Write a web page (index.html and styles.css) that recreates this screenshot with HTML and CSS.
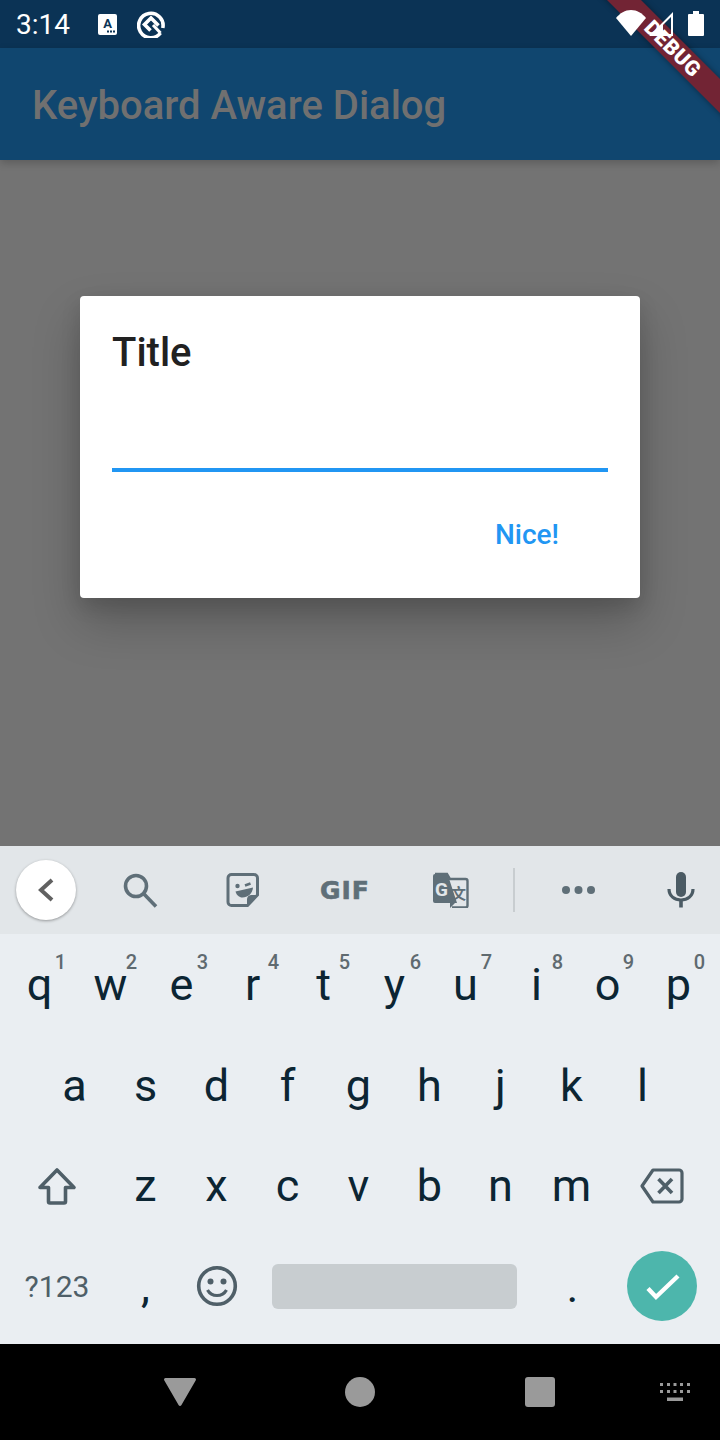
FILE: index.html
```html
<!DOCTYPE html>
<html lang="en">
<head>
  <meta charset="UTF-8">
  <meta name="viewport" content="width=device-width, initial-scale=1.0">
  <title>Keyboard Aware Dialog</title>
  <link rel="stylesheet" href="styles.css">
</head>
<body>
  <div class="status">
    <div class="status-left">
      <span class="time">3:14</span>
      <svg class="icon-a" viewBox="0 0 19 21">
        <rect width="19" height="21" rx="2" fill="#fff"/>
        <text x="9.5" y="13.5" text-anchor="middle" class="icon-a-letter">A</text>
        <path d="M9 16.500h2v2H9zM12 16.500h2v2h-2zM15 16.500h2v2h-2z" fill="#0b3355"/>
      </svg>
      <svg class="icon-q" viewBox="0 0 28 28">
        <path d="M23.500 23A12.200 12.200 0 1 1 25.800 18" fill="none" stroke="#fff" stroke-width="3.600"/>
        <path d="M21.500 15.500 14 8 7.500 14.500 13.500 20.500" fill="none" stroke="#fff" stroke-width="3.600"/>
        <path d="M16 15 23.500 23" fill="none" stroke="#fff" stroke-width="3"/>
      </svg>
    </div>
    <div class="status-right">
      <svg class="icon-wifi" viewBox="0 0 30 26">
        <path d="M0 8C4 3 9 0 15 0s11 3 15 8L15 26Z" fill="#fff"/>
      </svg>
      <svg class="icon-signal" viewBox="0 0 24 24">
        <path d="M23 2.500V23H2.500Z" fill="none" stroke="#fff" stroke-width="2"/>
        <path d="M1 24 14 11V24Z" fill="#fff"/>
      </svg>
      <svg class="icon-battery" viewBox="0 0 16 25">
        <path d="M5 0h6v3h4a1 1 0 0 1 1 1v20a1 1 0 0 1-1 1H1a1 1 0 0 1-1-1V4a1 1 0 0 1 1-1h4Z" fill="#fff"/>
      </svg>
    </div>
  </div>

  <header class="appbar">
    <h1>Keyboard Aware Dialog</h1>
  </header>

  <main class="content">
    <div class="dialog">
      <h2>Title</h2>
      <div class="field"></div>
      <div class="actions">
        <span class="action-btn">Nice!</span>
      </div>
    </div>
  </main>

  <div class="corner">
    <div class="ribbon">DEBUG</div>
  </div>

  <section class="keyboard">
    <div class="toolbar">
      <div class="tool">
        <div class="back">
          <svg width="24" height="30" viewBox="0 0 24 30"><path d="M18 5 7 15 18 25" fill="none" stroke="#616161" stroke-width="4"/></svg>
        </div>
      </div>
      <div class="tool">
        <svg width="36" height="36" viewBox="0 0 36 36">
          <circle cx="13" cy="14" r="10.500" fill="none" stroke="#5f6f78" stroke-width="3.600"/>
          <path d="M20.500 21.500 33 34.500" fill="none" stroke="#5f6f78" stroke-width="3.600"/>
        </svg>
      </div>
      <div class="tool">
        <svg width="36" height="36" viewBox="0 0 36 36">
          <path d="M6.500 2.500H29A3.500 3.500 0 0 1 32.500 6V23L22.500 33.500H6.500A3.500 3.500 0 0 1 3 30V6A3.500 3.500 0 0 1 6.500 2.500Z" fill="none" stroke="#5f6f78" stroke-width="3"/>
          <path d="M32 23h-6a4.500 4.500 0 0 0-4 4v6Z" fill="#5f6f78"/>
          <circle cx="12.500" cy="14" r="2.200" fill="#5f6f78"/>
          <path d="M20 13.500 25.500 11.500" stroke="#5f6f78" stroke-width="2.600" fill="none"/>
          <path d="M10.500 19.500 28 15.500C27.500 22 22.500 25.500 17.500 25.500 14 25.500 11.500 23 10.500 19.500Z" fill="#5f6f78"/>
        </svg>
      </div>
      <div class="tool gif">GIF</div>
      <div class="tool">
        <svg width="36" height="36" viewBox="0 0 36 36">
          <path d="M2 2H14L17 7H32.500A2 2 0 0 1 34.500 9V33.500A2 2 0 0 1 32.500 35.500H19" fill="none" stroke="#5f6f78" stroke-width="2.400"/>
          <path d="M2 2H14.500L24 31H22L17 36V31H2A2 2 0 0 1 0 29V4A2 2 0 0 1 2 2Z" fill="#5f6f78"/>
          <text x="8.500" y="23.500" text-anchor="middle" class="translate-g">G</text>
          <text x="25.500" y="27" text-anchor="middle" class="translate-x">文</text>
        </svg>
      </div>
      <div class="tool"><div class="tool-sep"></div></div>
      <div class="tool">
        <svg width="34" height="10" viewBox="0 0 34 10">
          <circle cx="5" cy="5" r="4" fill="#5f6f78"/>
          <circle cx="17.500" cy="5" r="4" fill="#5f6f78"/>
          <circle cx="30" cy="5" r="4" fill="#5f6f78"/>
        </svg>
      </div>
      <div class="tool tool-mic">
        <svg width="28" height="36" viewBox="0 0 28 36">
          <rect x="9" y="0" width="10" height="25" rx="5" fill="#4b5b64"/>
          <path d="M2 17C2 24 7.500 28 14 28S26 24 26 17" fill="none" stroke="#4b5b64" stroke-width="3.200"/>
          <path d="M14 27V35.500" stroke="#4b5b64" stroke-width="3.600"/>
        </svg>
      </div>
    </div>

    <div class="keys">
      <div class="row">
        <div class="key">q<sup>1</sup></div>
        <div class="key">w<sup>2</sup></div>
        <div class="key">e<sup>3</sup></div>
        <div class="key">r<sup>4</sup></div>
        <div class="key">t<sup>5</sup></div>
        <div class="key">y<sup>6</sup></div>
        <div class="key">u<sup>7</sup></div>
        <div class="key">i<sup>8</sup></div>
        <div class="key">o<sup>9</sup></div>
        <div class="key">p<sup>0</sup></div>
      </div>
      <div class="row row-home">
        <div class="key">a</div>
        <div class="key">s</div>
        <div class="key">d</div>
        <div class="key">f</div>
        <div class="key">g</div>
        <div class="key">h</div>
        <div class="key">j</div>
        <div class="key">k</div>
        <div class="key">l</div>
      </div>
      <div class="row">
        <div class="key key-wide">
          <svg width="40" height="38" viewBox="0 0 40 38"><path d="M20 3 37 20.500H28.500V34.500A1.500 1.500 0 0 1 27 36H13A1.500 1.500 0 0 1 11.500 34.500V20.500H3Z" fill="none" stroke="#4f5f68" stroke-width="3.600" stroke-linejoin="round"/></svg>
        </div>
        <div class="key">z</div>
        <div class="key">x</div>
        <div class="key">c</div>
        <div class="key">v</div>
        <div class="key">b</div>
        <div class="key">n</div>
        <div class="key">m</div>
        <div class="key key-wide key-del">
          <svg width="44" height="36" viewBox="0 0 44 36">
            <path d="M13 2H39A3 3 0 0 1 42 5V31A3 3 0 0 1 39 34H13L2 18Z" fill="none" stroke="#4f5f68" stroke-width="3.200" stroke-linejoin="round"/>
            <path d="M18.500 11 32 25M32 11 18.500 25" stroke="#4f5f68" stroke-width="3.600"/>
          </svg>
        </div>
      </div>
      <div class="row">
        <div class="key key-wide key-sym">?123</div>
        <div class="key">,</div>
        <div class="key">
          <svg width="42" height="42" viewBox="0 0 42 42">
            <circle cx="21" cy="21" r="18.300" fill="none" stroke="#4f5f68" stroke-width="3.600"/>
            <circle cx="14.500" cy="16.500" r="3" fill="#4f5f68"/>
            <circle cx="27.500" cy="16.500" r="3" fill="#4f5f68"/>
            <path d="M11.500 25C13.500 28.500 17 30.500 21 30.500S28.500 28.500 30.500 25" fill="none" stroke="#4f5f68" stroke-width="3.200"/>
          </svg>
        </div>
        <div class="key key-space"><div class="space-bar"></div></div>
        <div class="key">.</div>
        <div class="key key-wide">
          <div class="enter">
            <svg width="36" height="30" viewBox="0 0 36 30"><path d="M4 17.500 12 26 34 5" fill="none" stroke="#fff" stroke-width="4.400"/></svg>
          </div>
        </div>
      </div>
    </div>
  </section>

  <nav class="navbar">
    <div class="nav-item">
      <svg width="32" height="28" viewBox="0 0 32 28"><path d="M1.500 0H30.500A1.500 1.500 0 0 1 31.800 2.200L17.300 27.200A1.500 1.500 0 0 1 14.700 27.200L.2 2.200A1.500 1.500 0 0 1 1.500 0Z" fill="#9a9a9a"/></svg>
    </div>
    <div class="nav-item"><div class="nav-circle"></div></div>
    <div class="nav-item"><div class="nav-square"></div></div>
    <div class="nav-item">
      <svg width="30" height="18" viewBox="0 0 30 18">
        <path d="M0 0h3v3H0zM7 0h3v3H7zM13.500 0h3v3h-3zM20 0h3v3h-3zM27 0h3v3h-3zM0 7h3v3H0zM7 7h3v3H7zM13.500 7h3v3h-3zM20 7h3v3h-3zM27 7h3v3h-3zM7 14.500h16V18H7z" fill="#9a9a9a"/>
      </svg>
    </div>
  </nav>
</body>
</html>
```

FILE: styles.css
```css
* {
  box-sizing: border-box;
}

html, body {
  margin: 0;
  height: 1440px;
}

body {
  width: 720px;
  display: flex;
  flex-direction: column;
  overflow: hidden;
  position: relative;
  font-family: Roboto, 'Noto Sans', sans-serif;
  background-color: #737373;
}

/* status bar */
.status {
  height: 48px;
  flex: none;
  display: flex;
  justify-content: space-between;
  background-color: #0b3355;
  color: #fff;
}

.status-left {
  display: flex;
  align-items: center;
  padding-left: 16px;
}

.time {
  font-size: 28px;
  width: 82px;
}

.icon-a {
  width: 19px;
  height: 21px;
}

.icon-a-letter {
  font-size: 13px;
  font-weight: 700;
  fill: #0b3355;
}

.icon-q {
  width: 28px;
  height: 28px;
  margin-left: 20px;
}

.status-right {
  position: relative;
  z-index: 3;
  display: grid;
  grid-template-columns: 30px 24px 28px;
  column-gap: 3px;
  align-items: start;
  padding: 10px 16px 0 0;
}

.icon-wifi {
  width: 30px;
  height: 26px;
}

.icon-signal {
  width: 24px;
  height: 24px;
  margin-top: 2px;
}

.icon-battery {
  width: 16px;
  height: 25px;
  margin-top: 1px;
  justify-self: end;
}

/* app bar */
.appbar {
  height: 112px;
  flex: none;
  display: flex;
  align-items: center;
  padding: 2px 0 0 32px;
  background-color: #10466f;
  box-shadow: 0 3px 8px rgba(0, 0, 0, 0.2);
  position: relative;
}

.appbar h1 {
  margin: 0;
  font-size: 40px;
  font-weight: 500;
  color: #707070;
}

.content {
  flex: 1;
  padding: 136px 80px 0;
}

/* dialog */
.dialog {
  height: 302px;
  padding: 33px 32px 0;
  background-color: #fff;
  border-radius: 4px;
  box-shadow: 0 24px 48px rgba(0, 0, 0, 0.22), 0 8px 20px rgba(0, 0, 0, 0.12);
}

.dialog h2 {
  margin: 0;
  font-size: 40px;
  line-height: 48px;
  font-weight: 500;
  color: #212121;
}

.field {
  height: 95px;
  border-bottom: 4px solid #2196f3;
}

.actions {
  display: flex;
  justify-content: flex-end;
  padding: 45px 49px 0 0;
}

.action-btn {
  font-size: 28px;
  line-height: 36px;
  font-weight: 500;
  color: #2196f3;
}

/* flutter debug banner */
.corner {
  position: absolute;
  z-index: 2;
  top: 0;
  right: 0;
  width: 130px;
  height: 130px;
  overflow: hidden;
}

.ribbon {
  position: absolute;
  left: -38px;
  top: 36px;
  width: 240px;
  height: 24px;
  transform: rotate(45deg);
  background-color: #722434;
  box-shadow: 0 0 6px rgba(0, 0, 0, 0.4);
  color: #fff;
  font-size: 21px;
  font-weight: 900;
  letter-spacing: 0.5px;
  line-height: 24px;
  text-align: center;
  text-indent: 2px;
}

/* keyboard */
.keyboard {
  height: 498px;
  flex: none;
  background-color: #eaeef2;
  color: #0c2533;
}

.toolbar {
  height: 88px;
  display: grid;
  grid-template-columns: 92px 98px 106px 98px 114px 12px 116px 84px;
  background-color: #e2e6e9;
}

.tool {
  display: flex;
  align-items: center;
  justify-content: center;
}

.tool-mic {
  justify-content: flex-end;
  padding-right: 25px;
}

.back {
  width: 60px;
  height: 60px;
  display: flex;
  align-items: center;
  justify-content: center;
  border-radius: 50%;
  background-color: #fff;
  box-shadow: 0 1px 3px rgba(0, 0, 0, 0.35);
}

.gif {
  font-family: 'DejaVu Sans', sans-serif;
  font-size: 25px;
  font-weight: 700;
  letter-spacing: 1px;
  -webkit-text-stroke: 0.6px #5f6f78;
  color: #5f6f78;
}

.translate-g {
  font-size: 19px;
  font-weight: 700;
  fill: #e2e6e9;
}

.translate-x {
  font-size: 15px;
  font-weight: 700;
  font-family: 'Noto Sans CJK SC', sans-serif;
  fill: #5f6f78;
}

.tool-sep {
  width: 2px;
  height: 44px;
  background-color: #c8cdd0;
}

.row {
  display: flex;
  height: 100.7px;
  padding: 0 4px;
}

.row-home {
  padding: 0 39px;
}

.key {
  width: 71px;
  flex: none;
  position: relative;
  display: flex;
  align-items: center;
  justify-content: center;
  font-size: 45px;
}

.key sup {
  position: absolute;
  top: 16px;
  right: 9px;
  font-size: 20px;
  font-weight: 500;
  line-height: 24px;
  color: #5f6a70;
}

.key-wide {
  width: 106px;
}

.key-del {
  padding-left: 3px;
}

.key-sym {
  font-size: 30px;
  color: #4f5f68;
}

.key-space {
  width: 285px;
}

.space-bar {
  width: 245px;
  height: 45px;
  border-radius: 6px;
  background-color: #c8cdd0;
}

.enter {
  width: 70px;
  height: 70px;
  margin-left: 2px;
  display: flex;
  align-items: center;
  justify-content: center;
  border-radius: 50%;
  background-color: #4db6ac;
}

/* nav bar */
.navbar {
  height: 96px;
  flex: none;
  display: grid;
  grid-template-columns: 180px 180px 180px 90px;
  padding-left: 90px;
  background-color: #000;
}

.nav-item {
  display: flex;
  align-items: center;
  justify-content: center;
}

.nav-circle {
  width: 30px;
  height: 30px;
  border-radius: 50%;
  background-color: #9a9a9a;
}

.nav-square {
  width: 30px;
  height: 30px;
  border-radius: 3px;
  background-color: #9a9a9a;
}
```
